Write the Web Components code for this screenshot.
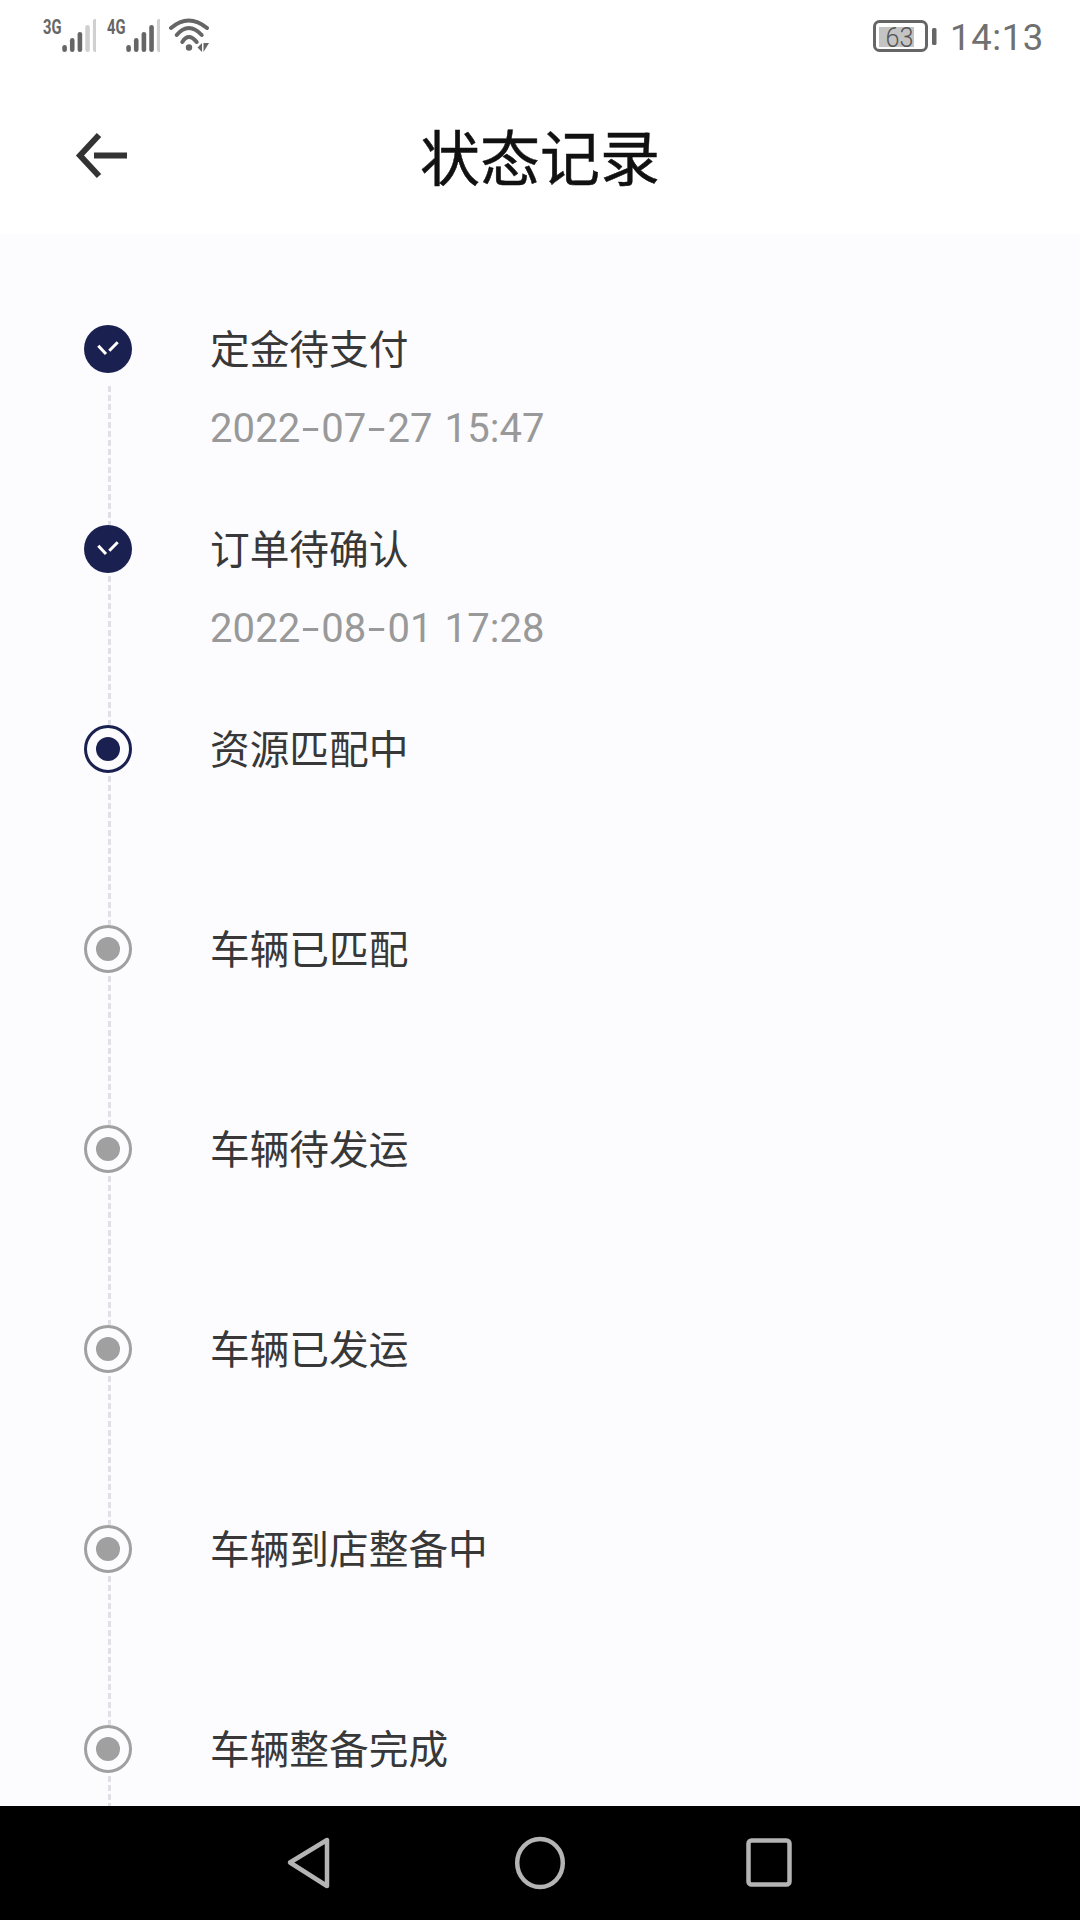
<!DOCTYPE html>
<html lang="zh">
<head>
<meta charset="utf-8">
<title>状态记录</title>
<style>
  html, body { margin: 0; padding: 0; background: #fff; }
  body { font-family: Roboto, "Noto Sans CJK SC", sans-serif; width: 1080px; height: 1920px; overflow: hidden; }
  phone-screen { height: 1920px; }
</style>
</head>
<body>
<phone-screen>
  <status-bar slot="status"></status-bar>
  <app-header slot="header">状态记录</app-header>
  <time-line slot="body">
    <time-item state="done" time="2022-07-27 15:47">定金待支付</time-item>
    <time-item state="done" time="2022-08-01 17:28">订单待确认</time-item>
    <time-item state="current">资源匹配中</time-item>
    <time-item>车辆已匹配</time-item>
    <time-item>车辆待发运</time-item>
    <time-item>车辆已发运</time-item>
    <time-item>车辆到店整备中</time-item>
    <time-item>车辆整备完成</time-item>
  </time-line>
  <nav-bar slot="nav"></nav-bar>
</phone-screen>

<script>
class PhoneScreen extends HTMLElement {
  constructor() {
    super();
    this.attachShadow({mode: 'open'});
    this.shadowRoot.innerHTML = `
      <style>
        :host { display: flex; flex-direction: column; width: 1080px; background: #fff; }
        .body { flex: 1; min-height: 0; overflow: hidden; background: #fcfcfe; }
      </style>
      <slot name="status"></slot>
      <slot name="header"></slot>
      <div class="body"><slot name="body"></slot></div>
      <slot name="nav"></slot>
    `;
  }
}
customElements.define('phone-screen', PhoneScreen);

class SignalIcon extends HTMLElement {
  constructor() {
    super();
    this.attachShadow({mode: 'open'});
  }
  connectedCallback() {
    const on = Number(this.getAttribute('on'));
    const tops = [26, 19, 13, 6, 0];
    let bars = '';
    tops.forEach((top, i) => {
      const x = 19.3 + i * 7.65;
      const color = i < on ? '#666' : '#d0d0d0';
      bars += `<rect x="${x}" y="${top + 19}" width="4.6" height="${33 - top}" rx="2.3" fill="${color}"/>`;
    });
    this.shadowRoot.innerHTML = `
      <style>
        :host { display: block; width: 53px; height: 56px; }
        svg { display: block; }
        text { font: 700 21px Roboto, sans-serif; fill: #666; }
      </style>
      <svg width="53" height="56" viewBox="0 0 53 56">
        <text x="0" y="34" textLength="18.500" lengthAdjust="spacingAndGlyphs">${this.getAttribute('label')}</text>
        ${bars}
      </svg>
    `;
  }
}
customElements.define('signal-icon', SignalIcon);

class StatusBar extends HTMLElement {
  constructor() {
    super();
    this.attachShadow({mode: 'open'});
    this.shadowRoot.innerHTML = `
      <style>
        :host { display: flex; height: 72px; padding: 0 36px 0 43px; color: #666; align-items: flex-start; }
        svg { display: block; }
        .second { margin-left: 11px; }
        .wifi { margin-left: 9px; }
        .battery { margin-left: auto; }
        .time { margin-left: 13px; font: 400 36.5px/76px Roboto, sans-serif; letter-spacing: .6px; color: #707070; }
      </style>
      <signal-icon label="3G" on="3"></signal-icon>
      <signal-icon class="second" label="4G" on="4"></signal-icon>
      <svg class="wifi" width="40" height="56" viewBox="0 0 40 56" fill="none" stroke="#666" stroke-width="4" stroke-linecap="round">
        <path d="M2 28 Q19.500 13 38 28"/>
        <path d="M7.700 35 Q19.500 21 32.700 35"/>
        <path d="M13.300 42 Q19.500 32 27.700 42"/>
        <circle cx="20" cy="47.500" r="3.200" fill="#666" stroke="none"/>
        <path d="M28.500 47.500 L33 43 V52 Z" fill="#666" stroke="none"/>
        <path d="M34.500 43 H40 L34.500 52 Z" fill="#666" stroke="none"/>
      </svg>
      <svg class="battery" width="64" height="56" viewBox="0 0 64 56">
        <rect x="6" y="27" width="35" height="20" fill="#c4c4c4"/>
        <rect x="1.500" y="21.500" width="52" height="29" rx="5" fill="none" stroke="#666" stroke-width="3"/>
        <rect x="59" y="28" width="4.500" height="17" rx="1.500" fill="#666"/>
        <text x="26.500" y="46.500" text-anchor="middle" font-family="Roboto, sans-serif" font-weight="300" font-size="27" textLength="28" lengthAdjust="spacingAndGlyphs" fill="#555">63</text>
      </svg>
      <span class="time">14:13</span>
    `;
  }
}
customElements.define('status-bar', StatusBar);

class AppHeader extends HTMLElement {
  constructor() {
    super();
    this.attachShadow({mode: 'open'});
    this.shadowRoot.innerHTML = `
      <style>
        :host { display: grid; grid-template-columns: 1fr auto 1fr; height: 162px; background: #fff; align-items: start; }
        svg { display: block; margin: 59px 0 0 72px; }
        .title { margin-top: 48px; font: 400 60px/70px "Noto Sans CJK SC", sans-serif; color: #111; -webkit-text-stroke: .5px #111; }
      </style>
      <svg width="58" height="50" viewBox="0 0 58 50" fill="none" stroke="#333" stroke-width="6">
        <path d="M27 4 L8 24.500 L27 45"/>
        <path d="M22 24.500 H55"/>
      </svg>
      <div class="title"><slot></slot></div>
      <span></span>
    `;
  }
}
customElements.define('app-header', AppHeader);

class TimeLine extends HTMLElement {
  constructor() {
    super();
    this.attachShadow({mode: 'open'});
    this.shadowRoot.innerHTML = `
      <style>
        :host { display: block; padding: 91px 0 0 84px; }
      </style>
      <slot></slot>
    `;
  }
}
customElements.define('time-line', TimeLine);

class TimeItem extends HTMLElement {
  constructor() {
    super();
    this.attachShadow({mode: 'open'});
  }
  connectedCallback() {
    const state = this.getAttribute('state') || 'todo';
    const time = this.getAttribute('time');
    let icon;
    if (state === 'done') {
      icon = `<circle cx="24" cy="24" r="24" fill="#1a2151"/>
        <path d="M14.300 20.700 L22 29 M25.300 25.700 L33.700 17.300" stroke="#fff" stroke-width="3" fill="none"/>`;
    } else {
      const color = state === 'current' ? '#1a2151' : '#a0a0a0';
      icon = `<circle cx="24" cy="24" r="22.500" fill="none" stroke="${color}" stroke-width="3"/>
        <circle cx="24" cy="24" r="12" fill="${color}"/>`;
    }
    // hyphens are drawn wider in the original's font
    const timeHtml = time ? time.replace(/-/g, '<span class="dash">-</span>') : '';
    this.shadowRoot.innerHTML = `
      <style>
        :host { display: flex; height: 200px; }
        :host(:first-of-type) .line { margin-top: 13px; }
        .rail { display: flex; flex-direction: column; align-items: center; width: 48px; margin-right: 78px; }
        svg { display: block; flex: none; }
        .line {
          flex: 1; width: 3px; margin-left: 2px; margin-top: 3px;
          background: repeating-linear-gradient(to bottom, #e0e0e7 0 6px, transparent 6px 9px);
        }
        .label { margin-top: -2px; font: 400 39.700px/48px "Noto Sans CJK SC", sans-serif; color: #383838; }
        .time { margin: 34px 0 0; font: 400 40px/48px Roboto, "Noto Sans CJK SC", sans-serif; word-spacing: 2px; letter-spacing: .1px; color: #999; }
        .dash { display: inline-block; margin: 0 4.900px; transform: scaleX(1.6); }
      </style>
      <div class="rail">
        <svg width="48" height="48" viewBox="0 0 48 48">${icon}</svg>
        <div class="line"></div>
      </div>
      <div>
        <div class="label"><slot></slot></div>
        ${time ? `<div class="time">${timeHtml}</div>` : ''}
      </div>
    `;
  }
}
customElements.define('time-item', TimeItem);

class NavBar extends HTMLElement {
  constructor() {
    super();
    this.attachShadow({mode: 'open'});
    this.shadowRoot.innerHTML = `
      <style>
        :host { display: flex; flex: none; height: 114px; background: #000; align-items: center; padding-left: 286px; }
        svg { display: block; }
        .home { margin-left: 183px; }
        .recent { margin-left: 178px; }
      </style>
      <svg width="44" height="54" viewBox="0 0 44 54" fill="none" stroke="#b4b4b4" stroke-width="4.500" stroke-linejoin="round">
        <path d="M4 26.500 L41 4 V50 Z"/>
      </svg>
      <svg class="home" width="54" height="54" viewBox="0 0 54 54" fill="none" stroke="#b4b4b4" stroke-width="4.500">
        <ellipse cx="27" cy="27" rx="22.800" ry="24"/>
      </svg>
      <svg class="recent" width="48" height="52" viewBox="0 0 48 52" fill="none" stroke="#b4b4b4" stroke-width="4.500">
        <rect x="3.500" y="3.500" width="41" height="44" rx="3"/>
      </svg>
    `;
  }
}
customElements.define('nav-bar', NavBar);
</script>
</body>
</html>
